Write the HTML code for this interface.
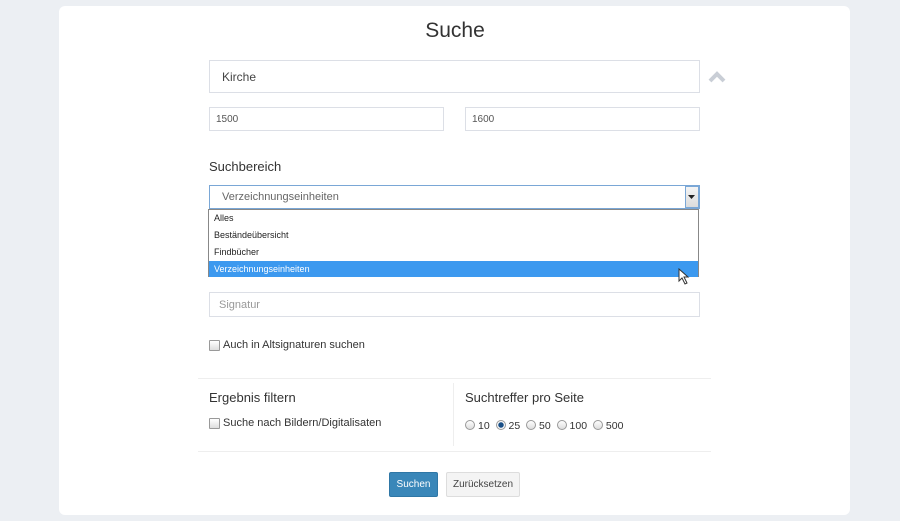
<!DOCTYPE html>
<html><head><meta charset="utf-8"><style>
*{box-sizing:border-box;margin:0;padding:0}
html,body{width:900px;height:521px;overflow:hidden}
body{background:#eceff3;font-family:"Liberation Sans",sans-serif;color:#333;position:relative}
.card{position:absolute;left:59px;top:6px;width:791px;height:509px;background:#fff;border-radius:6px}
.a{position:absolute}
.inp{position:absolute;background:#fff;border:1px solid #dcdfe6;font-size:11px;color:#555;padding-left:9px;display:flex;align-items:center}
.cb{position:absolute;width:11px;height:11px;border:1px solid #999;background:linear-gradient(#fff,#ddd);border-radius:1px}
.rd{display:inline-block;width:10px;height:10px;border:1px solid #999;border-radius:50%;background:linear-gradient(#fff,#ddd);vertical-align:-1px;margin-right:3px}
.t{font-size:11px;color:#333;position:absolute}
.btn{position:absolute;height:25px;border-radius:2px;font-size:10px;display:flex;align-items:center;justify-content:center}
</style></head><body>
<div class="card"></div>
<div class="a" style="left:0;width:910px;top:19px;text-align:center;font-size:21px;color:#333">Suche</div>
<div class="inp" style="left:209px;top:60px;width:491px;height:33px;font-size:12px;color:#444;padding-left:12px">Kirche</div>
<svg class="a" style="left:708px;top:71px" width="18" height="12"><path d="M2 10 L9 3 L16 10" stroke="#c9ced6" stroke-width="4" fill="none"/></svg>
<div class="inp" style="left:209px;top:107px;width:235px;height:24px;font-size:10px;padding-left:6px">1500</div>
<div class="inp" style="left:465px;top:107px;width:235px;height:24px;font-size:10px;padding-left:6px">1600</div>
<div class="a" style="left:209px;top:159px;font-size:13px;color:#333">Suchbereich</div>
<div class="inp" style="left:209px;top:185px;width:491px;height:24px;border-color:#7aa7d6;font-size:11px;padding-left:12px;color:#666">Verzeichnungseinheiten</div>
<div class="a" style="left:685px;top:186px;width:14px;height:22px;background:linear-gradient(#f4f4f4,#dcdcdc);border:1px solid #7aa7d6"></div>
<svg class="a" style="left:688px;top:195px" width="8" height="5"><path d="M0 0 L7 0 L3.5 4z" fill="#222"/></svg>
<div class="a" style="left:208px;top:209px;width:491px;height:68px;background:#fff;border:1px solid #888;font-size:9px;color:#222">
<div style="height:17px;line-height:17px;padding-left:5px">Alles</div>
<div style="height:17px;line-height:17px;padding-left:5px">Beständeübersicht</div>
<div style="height:17px;line-height:17px;padding-left:5px">Findbücher</div>
<div style="height:16px;line-height:16px;padding-left:5px;background:#3c99ef;color:#fff">Verzeichnungseinheiten</div>
</div>
<svg class="a" style="left:678px;top:268px" width="12" height="17"><path d="M1 1 L1 13 L4 10 L7 16 L9 15 L6 9 L10 9 Z" fill="#fff" stroke="#333" stroke-width="1"/></svg>
<div class="inp" style="left:209px;top:292px;width:491px;height:25px;color:#999;font-size:11px;padding-left:9px">Signatur</div>
<div class="cb" style="left:209px;top:340px"></div>
<div class="t" style="left:223px;top:339px">Auch in Altsignaturen suchen</div>
<div class="a" style="left:198px;top:378px;width:513px;height:1px;background:#eee"></div>
<div class="a" style="left:198px;top:451px;width:513px;height:1px;background:#eee"></div>
<div class="a" style="left:453px;top:383px;width:1px;height:63px;background:#eee"></div>
<div class="a" style="left:209px;top:390px;font-size:13px;color:#333">Ergebnis filtern</div>
<div class="cb" style="left:209px;top:418px"></div>
<div class="t" style="left:223px;top:417px">Suche nach Bildern/Digitalisaten</div>
<div class="a" style="left:465px;top:390px;font-size:13px;color:#333">Suchtreffer pro Seite</div>
<div class="t" style="left:465px;top:420px;font-size:10.5px"><span class="rd"></span>10&nbsp; <span class="rd" style="background:radial-gradient(#1a4f86 0 2.5px,#fff 3px,#ddd)"></span>25&nbsp; <span class="rd"></span>50&nbsp; <span class="rd"></span>100&nbsp; <span class="rd"></span>500</div>
<div class="btn" style="left:389px;top:472px;width:49px;background:#3a87b9;border:1px solid #2f77a6;color:#fff">Suchen</div>
<div class="btn" style="left:446px;top:472px;width:74px;background:#f4f4f4;border:1px solid #ddd;color:#444">Zurücksetzen</div>
</body></html>
